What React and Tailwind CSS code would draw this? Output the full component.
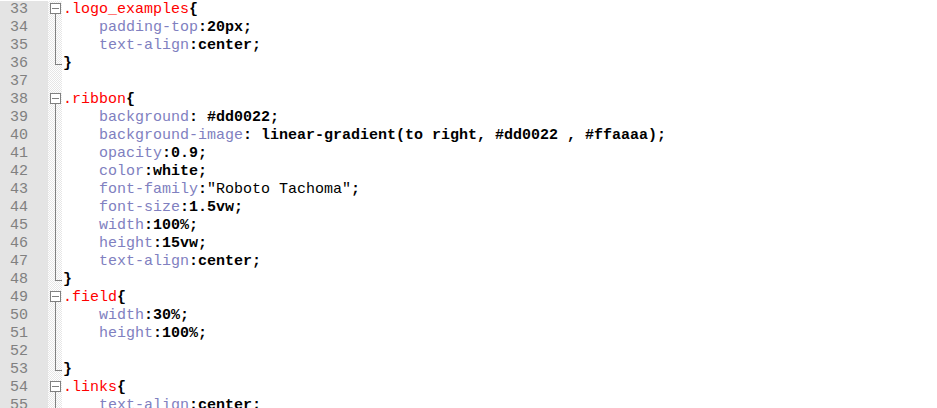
const P = 'text-[#8080c0]';
const V = 'text-black font-bold';
const S = 'text-[#ff0000]';
const N = 'text-black';

const lines = [
  { n: 33, fold: 'start', t: [['.logo_examples', S], ['{', V]] },
  { n: 34, fold: 'mid', t: [['    '], ['padding-top', P], [':20px;', V]] },
  { n: 35, fold: 'mid', t: [['    '], ['text-align', P], [':center;', V]] },
  { n: 36, fold: 'end', t: [['}', V]] },
  { n: 37, fold: 'none', t: [] },
  { n: 38, fold: 'start', t: [['.ribbon', S], ['{', V]] },
  { n: 39, fold: 'mid', t: [['    '], ['background', P], [': #dd0022;', V]] },
  { n: 40, fold: 'mid', t: [['    '], ['background-image', P], [': linear-gradient(to right, #dd0022 , #ffaaaa);', V]] },
  { n: 41, fold: 'mid', t: [['    '], ['opacity', P], [':0.9;', V]] },
  { n: 42, fold: 'mid', t: [['    '], ['color', P], [':white;', V]] },
  { n: 43, fold: 'mid', t: [['    '], ['font-family', P], [':', V], ['"Roboto Tachoma"', N], [';', V]] },
  { n: 44, fold: 'mid', t: [['    '], ['font-size', P], [':1.5vw;', V]] },
  { n: 45, fold: 'mid', t: [['    '], ['width', P], [':100%;', V]] },
  { n: 46, fold: 'mid', t: [['    '], ['height', P], [':15vw;', V]] },
  { n: 47, fold: 'mid', t: [['    '], ['text-align', P], [':center;', V]] },
  { n: 48, fold: 'end', t: [['}', V]] },
  { n: 49, fold: 'start', t: [['.field', S], ['{', V]] },
  { n: 50, fold: 'mid', t: [['    '], ['width', P], [':30%;', V]] },
  { n: 51, fold: 'mid', t: [['    '], ['height', P], [':100%;', V]] },
  { n: 52, fold: 'mid', t: [] },
  { n: 53, fold: 'end', t: [['}', V]] },
  { n: 54, fold: 'start', t: [['.links', S], ['{', V]] },
  { n: 55, fold: 'mid', t: [['    '], ['text-align', P], [':center;', V]] },
];

// fold margin marker, drawn like Notepad++'s box tree
function Fold({ type }) {
  if (type === 'none') return null;
  return (
    <svg width="14" height="18" viewBox="0 0 14 18" className="block" shapeRendering="crispEdges">
      {type === 'start' && (
        <>
          <rect x="2.5" y="2.5" width="10" height="10" fill="#fff" stroke="#808080" />
          <line x1="4" y1="7.5" x2="11" y2="7.5" stroke="#808080" />
          <line x1="7.5" y1="13" x2="7.5" y2="18" stroke="#808080" />
        </>
      )}
      {type === 'mid' && <line x1="7.5" y1="0" x2="7.5" y2="18" stroke="#808080" />}
      {type === 'end' && (
        <path d="M7.5 0 V9.5 H14" fill="none" stroke="#808080" />
      )}
    </svg>
  );
}

export default function App() {
  return (
    <div className="w-[937px] h-[408px] overflow-hidden bg-white font-['Liberation_Mono','Courier_New',monospace] text-[15px] leading-[18px]">
      <div className="pt-px">
        {lines.map((l) => (
          <div key={l.n} className="flex h-[18px]">
            <div className="w-[48px] shrink-0 bg-[#e4e4e4] text-[#808080] pl-[10px]">{l.n}</div>
            <div className="w-[14px] shrink-0 bg-[repeating-conic-gradient(#e6e6e6_0_25%,#ffffff_0_50%)] bg-[length:2px_2px]">
              <Fold type={l.fold} />
            </div>
            <div className="pl-px whitespace-pre">
              {l.t.map((tok, i) => (
                <span key={i} className={tok[1] || ''}>{tok[0]}</span>
              ))}
            </div>
          </div>
        ))}
      </div>
    </div>
  );
}
